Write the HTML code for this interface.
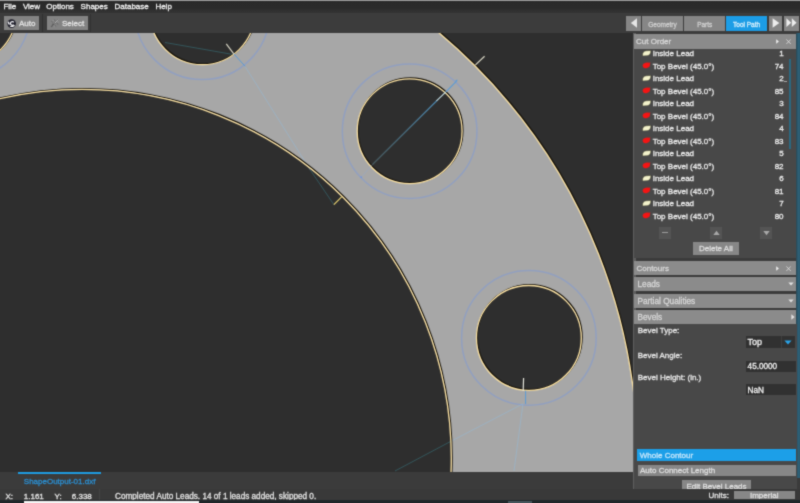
<!DOCTYPE html>
<html>
<head>
<meta charset="utf-8">
<style>
*{box-sizing:border-box;margin:0;padding:0}
html,body{width:800px;height:503px;overflow:hidden;background:#3b3b3b}
body{font-family:"Liberation Sans",sans-serif;font-size:8px;color:#e4e4e4;position:relative;filter:url(#soft);-webkit-text-stroke:0.3px}
.abs{position:absolute}
#menubar{left:0;top:0;width:800px;height:13px;background:linear-gradient(180deg,#2a2a2a 0,#2b2b2b 60%,#343434 100%)}
#topline{left:0;top:0;width:800px;height:1px;background:#9c9c9c}
#menubar span{position:absolute;top:1.9px;line-height:10px;font-size:8px;color:#f4f4f4;white-space:nowrap}
#toolbar{left:0;top:13px;width:800px;height:20px;background:#3c3c3c}
.tbtn{position:absolute;top:3.3px;height:13.7px;background:#838383;color:#e2e2e2;font-size:8px;line-height:15.2px;white-space:nowrap}
.tab{position:absolute;top:2.6px;height:15.2px;background:#868686;color:#cecece;font-size:6.5px;line-height:18.6px;text-align:center;white-space:nowrap}
#canvas{left:0;top:33px;width:633.4px;height:438.7px;overflow:hidden;background:#2e2e2e}
#panel{left:633.4px;top:33px;width:166.6px;height:457px;background:#3b3b3b}
.hdr{position:absolute;left:0.9px;width:161.7px;height:14px;background:#8b8b8b;color:#d6d6d6;font-size:8px;line-height:16.4px;padding-left:2.2px;white-space:nowrap}
.body{position:absolute;left:0.9px;width:161.7px;background:#484848}
.row{position:absolute;left:0;width:161.7px;height:12.5px;line-height:12.5px;font-size:8px;color:#ececec;white-space:nowrap}
.row .t{position:absolute;left:18.4px;top:0}
.row .n{position:absolute;right:12.4px;top:0;text-align:right}
.row svg{position:absolute;left:8.2px;top:1.7px}
.lbl{position:absolute;left:3.4px;font-size:8px;line-height:10px;color:#e6e6e6;white-space:nowrap}
.inp{position:absolute;left:111.3px;width:50.6px;overflow:hidden;background:#313131;color:#f0f0f0;font-size:8px;white-space:nowrap;padding-left:2px}
.gbtn{position:absolute;background:#878787;color:#dedede;font-size:8px;text-align:center;white-space:nowrap}
.sbtn{position:absolute;top:193.6px;width:12.4px;height:11.6px;background:#545454}
#tabstrip{left:0;top:471.7px;width:633.4px;height:17.8px;background:#3b3b3b}
#status{left:0;top:489.2px;width:800px;height:13.8px;background:#393939}
#status span{position:absolute;top:3px;line-height:10px;font-size:8px;color:#e2e2e2;white-space:nowrap}
</style>
</head>
<body>
<svg width="0" height="0" style="position:absolute"><defs><filter id="soft" x="0" y="0" width="100%" height="100%" color-interpolation-filters="sRGB"><feConvolveMatrix order="3" kernelMatrix="0.03 0.1 0.03 0.1 0.48 0.1 0.03 0.1 0.03" edgeMode="duplicate" preserveAlpha="true"/></filter></defs></svg>
<div id="menubar" class="abs">
<span style="left:3.4px">File</span><span style="left:22.9px">View</span><span style="left:46.3px">Options</span><span style="left:80.6px">Shapes</span><span style="left:114.5px">Database</span><span style="left:155.4px">Help</span>
</div>
<div id="topline" class="abs"></div>
<div id="toolbar" class="abs">
  <div class="tbtn" style="left:3.8px;width:35.3px"><span style="position:absolute;left:15.2px">Auto</span>
    <svg style="position:absolute;left:3.5px;top:2.4px" width="9.2" height="9.2" viewBox="0 0 10 10"><circle cx="5" cy="5" r="4.7" fill="#1f1f2b"/><ellipse cx="1.9" cy="4.6" rx="0.9" ry="1.9" transform="rotate(-25 1.9 4.6)" fill="#f0f0f4"/><path d="M7.4 3.6A2 2 0 1 0 7.2 6.2" fill="none" stroke="#f4f4f8" stroke-width="1.3"/><ellipse cx="6" cy="7.7" rx="2.7" ry="0.95" transform="rotate(-12 6 7.7)" fill="#f6f6f6"/></svg>
  </div>
  <div class="abs" style="left:41.6px;top:1px;width:1px;height:18px;background:#303030"></div>
  <div class="tbtn" style="left:46.9px;width:41.2px"><span style="position:absolute;left:15px">Select</span>
    <svg style="position:absolute;left:3.4px;top:1.8px" width="10" height="10" viewBox="0 0 10 10"><path d="M1.2 8.8L8.2 1.6" stroke="#5c5c5c" stroke-width="1.2" fill="none"/><path d="M4.6 5.4L8.2 1.6" stroke="#b4b4b4" stroke-width="1" fill="none"/><path d="M1.4 3.2L2.6 4.2M4.4 1.6L5 2.8M6.8 5.6L8.2 6.2M5.2 7.6L6.2 8.4M2 6L3 6.4" stroke="#5e5e5e" stroke-width="0.9" fill="none"/><path d="M2.8 2L3.4 2.8M7.4 3.8L8.6 4M3.6 8L4.4 8.6" stroke="#aaaaaa" stroke-width="0.8" fill="none"/></svg>
  </div>
  <div class="abs" style="left:89.6px;top:1px;width:1px;height:18px;background:#323232"></div>

  <div class="tab" style="left:626.1px;width:14.8px"><svg style="position:absolute;left:4.4px;top:2.6px" width="8" height="10" viewBox="0 0 8 10"><path d="M7 0.2L7 9.8L0.8 5Z" fill="#e6e6e6"/></svg></div>
  <div class="tab" style="left:642px;width:41px">Geometry</div>
  <div class="tab" style="left:684.4px;width:40.7px">Parts</div>
  <div class="tab" style="left:725.8px;width:41.6px;background:#1c9de6;color:#d4eefc">Tool Path</div>
  <div class="tab" style="left:768.5px;width:13.6px"><svg style="position:absolute;left:3.6px;top:2.6px" width="8" height="10" viewBox="0 0 8 10"><path d="M0.6 0.2L0.6 9.8L7.4 5Z" fill="#ececec"/></svg></div>
  <div class="tab" style="left:783.6px;width:15.3px"><svg style="position:absolute;left:2.2px;top:2.8px" width="11" height="9.4" viewBox="0 0 11 9.4"><path d="M0.4 0.3L0.4 9.1L5.2 4.7ZM5.8 0.3L5.8 9.1L10.6 4.7Z" fill="#eeeeee"/></svg></div>
</div>

<div id="canvas" class="abs">
<svg width="633.4" height="438.7" viewBox="0 33 633.4 438.7" style="position:absolute;left:0;top:0">
  <defs><linearGradient id="lg3" gradientUnits="userSpaceOnUse" x1="372.5" y1="164.5" x2="437" y2="100.5"><stop offset="0" stop-color="#46595e"/><stop offset="0.5" stop-color="#476a7c"/><stop offset="1" stop-color="#4c86ae"/></linearGradient></defs>
  <rect x="0" y="33" width="634" height="440" fill="#2e2e2e"/>
  <circle cx="82.4" cy="458.3" r="555.1" fill="#a7a7a7"/>
  <circle cx="82.4" cy="458.3" r="368.9" fill="#2e2e2e"/>
  <g fill="#2e2e2e">
    <circle cx="528.9" cy="337.9" r="52.4"/>
    <circle cx="409.65" cy="131.2" r="52.4"/>
    <circle cx="202.3" cy="12.3" r="52.4"/>
    <circle cx="-36.2" cy="12.3" r="52.4"/>
  </g>
  <!-- blue offset circles -->
  <g fill="none" stroke="#7395e2" stroke-width="1.5" opacity="0.42">
    <circle cx="528.9" cy="337.9" r="67.3"/>
    <circle cx="409.65" cy="131.2" r="67.3"/>
    <circle cx="202.3" cy="12.3" r="67.3"/>
    <circle cx="-36.2" cy="12.3" r="66.3"/>
  </g>
  <!-- rapid lines in gray -->
  <g fill="none" stroke="#8fbce0" stroke-width="0.9" opacity="0.5">
    <path d="M245 66.3L310.3 170"/>
    <path d="M522.8 403.9L451.5 441"/>
    <path d="M523 403.6L514 471"/>
  </g>
  <!-- rapid lines in dark -->
  <g fill="none" stroke="#35676f" stroke-width="1" opacity="0.7">
    <path d="M310.3 170L333.9 204.7"/>
    <path d="M165 42.5L233 54.5"/>
    <path d="M451.5 441L395 471"/>
    
  </g>
  <!-- dark outlines -->
  <g fill="none" stroke="#120e06" stroke-width="1.4" transform="translate(0.8,-0.8)">
    <circle cx="82.4" cy="458.3" r="555.1"/>
    <circle cx="82.4" cy="458.3" r="368.9"/>
    <circle cx="528.9" cy="337.9" r="52.4"/>
    <circle cx="409.65" cy="131.2" r="52.4"/>
    <circle cx="202.3" cy="12.3" r="52.4"/>
    <circle cx="-36.2" cy="12.3" r="52.4"/>
  </g>
  <!-- yellow outlines -->
  <g fill="none" stroke="#fbe2a4" stroke-width="1.3">
    <circle cx="82.4" cy="458.3" r="555.1"/>
    <circle cx="82.4" cy="458.3" r="368.9"/>
    <circle cx="528.9" cy="337.9" r="52.4"/>
    <circle cx="409.65" cy="131.2" r="52.4"/>
    <circle cx="202.3" cy="12.3" r="52.4"/>
    <circle cx="-36.2" cy="12.3" r="52.4"/>
  </g>
  <!-- leads -->
  <g fill="none" stroke-linecap="butt">
    <path d="M475.5 64.9L484.6 56.3" stroke="#d8d6c4" stroke-width="1.2"/>
    <path d="M341.6 196.9L333.9 204.7" stroke="#e8d070" stroke-width="1.2"/>
    <path d="M226.3 43.8L233.8 53.8" stroke="#d8d6c4" stroke-width="1.2"/>
    <path d="M233.8 53.8L245.1 66.3" stroke="#5b9bd5" stroke-width="1"/>
    <path d="M361.3 177.2L372.5 164.5" stroke="#90a8d0" stroke-width="1" opacity="0.45"/><circle cx="361.3" cy="177.2" r="0.9" fill="#6f93dc" opacity="0.8"/><path d="M372.5 164.5L437 100.5" stroke="url(#lg3)" stroke-width="1.25"/><path d="M436.5 100.8L445.9 91.9" stroke="#c4dfe6" stroke-width="1.1"/>
    <path d="M445.9 91.9L456.3 81.3" stroke="#5b9bd5" stroke-width="1.1"/>
    <path d="M455.2 80.2L457.6 79.4L456.9 82Z" fill="#5b9bd5" stroke="none"/>
    <path d="M523.6 378.1L523.2 390.8" stroke="#e6e6dc" stroke-width="1.2"/>
    <path d="M525.6 390.8L525.6 404" stroke="#5b9bd5" stroke-width="1"/>
  </g>
</svg>
</div>

<div id="panel" class="abs">
  <div class="abs" style="left:0;top:0;width:2.2px;height:457px;background:#5e5e5e"></div>
  <div class="abs" style="left:162.5px;top:0;width:3.7px;height:445px;background:linear-gradient(90deg,#2c4651,#2c5d74 50%,#2d637b 80%,#2b5262)"></div>
  <div class="hdr" style="top:1.2px;height:14.6px;line-height:15.6px;padding-left:1.8px">Cut Order
    <svg style="position:absolute;left:142.2px;top:4.6px" width="3" height="5" viewBox="0 0 3 5"><path d="M0.2 0.2L0.2 4.8L2.9 2.5Z" fill="#ececec"/></svg>
    <svg style="position:absolute;left:151.8px;top:4.4px" width="5.2" height="5.4" viewBox="0 0 5.2 5.4"><path d="M0.4 0.4L4.8 5M4.8 0.4L0.4 5" stroke="#e0e0e0" stroke-width="0.8" fill="none"/></svg>
  </div>
  <div class="body" id="cutbody" style="top:15.8px;height:209.6px">
    <div class="row" style="top:-0.6px"><svg width="9.4" height="6.6" viewBox="0 0 9.4 6.6"><path d="M0.5 6C0.2 2.7 1.7 0.9 4.2 0.8L8.9 0.4C9 3.5 7.7 5.4 5.2 5.7Z" fill="#f4f3cc" stroke="#3a3a24" stroke-width="0.5"/></svg><span class="t">Inside Lead</span><span class="n">1</span></div>
    <div class="row" style="top:11.9px"><svg width="9.4" height="6.6" viewBox="0 0 9.4 6.6"><ellipse cx="4.3" cy="3.4" rx="3.7" ry="2.7" transform="rotate(-14 4.3 3.4)" fill="#f41414"/><path d="M5 0.9L8.4 0.5L7.6 3Z" fill="#f41414"/></svg><span class="t">Top Bevel (45.0°)</span><span class="n">74</span></div>
    <div class="row" style="top:24.4px"><svg width="9.4" height="6.6" viewBox="0 0 9.4 6.6"><path d="M0.5 6C0.2 2.7 1.7 0.9 4.2 0.8L8.9 0.4C9 3.5 7.7 5.4 5.2 5.7Z" fill="#f4f3cc" stroke="#3a3a24" stroke-width="0.5"/></svg><span class="t">Inside Lead</span><span class="n">2</span><div class="abs" style="left:149.8px;top:7.8px;width:2.6px;height:0.8px;background:#a8a8a8"></div></div>
    <div class="row" style="top:36.9px"><svg width="9.4" height="6.6" viewBox="0 0 9.4 6.6"><ellipse cx="4.3" cy="3.4" rx="3.7" ry="2.7" transform="rotate(-14 4.3 3.4)" fill="#f41414"/><path d="M5 0.9L8.4 0.5L7.6 3Z" fill="#f41414"/></svg><span class="t">Top Bevel (45.0°)</span><span class="n">85</span></div>
    <div class="row" style="top:49.4px"><svg width="9.4" height="6.6" viewBox="0 0 9.4 6.6"><path d="M0.5 6C0.2 2.7 1.7 0.9 4.2 0.8L8.9 0.4C9 3.5 7.7 5.4 5.2 5.7Z" fill="#f4f3cc" stroke="#3a3a24" stroke-width="0.5"/></svg><span class="t">Inside Lead</span><span class="n">3</span></div>
    <div class="row" style="top:61.9px"><svg width="9.4" height="6.6" viewBox="0 0 9.4 6.6"><ellipse cx="4.3" cy="3.4" rx="3.7" ry="2.7" transform="rotate(-14 4.3 3.4)" fill="#f41414"/><path d="M5 0.9L8.4 0.5L7.6 3Z" fill="#f41414"/></svg><span class="t">Top Bevel (45.0°)</span><span class="n">84</span></div>
    <div class="row" style="top:74.4px"><svg width="9.4" height="6.6" viewBox="0 0 9.4 6.6"><path d="M0.5 6C0.2 2.7 1.7 0.9 4.2 0.8L8.9 0.4C9 3.5 7.7 5.4 5.2 5.7Z" fill="#f4f3cc" stroke="#3a3a24" stroke-width="0.5"/></svg><span class="t">Inside Lead</span><span class="n">4</span></div>
    <div class="row" style="top:86.9px"><svg width="9.4" height="6.6" viewBox="0 0 9.4 6.6"><ellipse cx="4.3" cy="3.4" rx="3.7" ry="2.7" transform="rotate(-14 4.3 3.4)" fill="#f41414"/><path d="M5 0.9L8.4 0.5L7.6 3Z" fill="#f41414"/></svg><span class="t">Top Bevel (45.0°)</span><span class="n">83</span></div>
    <div class="row" style="top:99.4px"><svg width="9.4" height="6.6" viewBox="0 0 9.4 6.6"><path d="M0.5 6C0.2 2.7 1.7 0.9 4.2 0.8L8.9 0.4C9 3.5 7.7 5.4 5.2 5.7Z" fill="#f4f3cc" stroke="#3a3a24" stroke-width="0.5"/></svg><span class="t">Inside Lead</span><span class="n">5</span></div>
    <div class="row" style="top:111.9px"><svg width="9.4" height="6.6" viewBox="0 0 9.4 6.6"><ellipse cx="4.3" cy="3.4" rx="3.7" ry="2.7" transform="rotate(-14 4.3 3.4)" fill="#f41414"/><path d="M5 0.9L8.4 0.5L7.6 3Z" fill="#f41414"/></svg><span class="t">Top Bevel (45.0°)</span><span class="n">82</span></div>
    <div class="row" style="top:124.4px"><svg width="9.4" height="6.6" viewBox="0 0 9.4 6.6"><path d="M0.5 6C0.2 2.7 1.7 0.9 4.2 0.8L8.9 0.4C9 3.5 7.7 5.4 5.2 5.7Z" fill="#f4f3cc" stroke="#3a3a24" stroke-width="0.5"/></svg><span class="t">Inside Lead</span><span class="n">6</span></div>
    <div class="row" style="top:136.9px"><svg width="9.4" height="6.6" viewBox="0 0 9.4 6.6"><ellipse cx="4.3" cy="3.4" rx="3.7" ry="2.7" transform="rotate(-14 4.3 3.4)" fill="#f41414"/><path d="M5 0.9L8.4 0.5L7.6 3Z" fill="#f41414"/></svg><span class="t">Top Bevel (45.0°)</span><span class="n">81</span></div>
    <div class="row" style="top:149.4px"><svg width="9.4" height="6.6" viewBox="0 0 9.4 6.6"><path d="M0.5 6C0.2 2.7 1.7 0.9 4.2 0.8L8.9 0.4C9 3.5 7.7 5.4 5.2 5.7Z" fill="#f4f3cc" stroke="#3a3a24" stroke-width="0.5"/></svg><span class="t">Inside Lead</span><span class="n">7</span></div>
    <div class="row" style="top:161.9px"><svg width="9.4" height="6.6" viewBox="0 0 9.4 6.6"><ellipse cx="4.3" cy="3.4" rx="3.7" ry="2.7" transform="rotate(-14 4.3 3.4)" fill="#f41414"/><path d="M5 0.9L8.4 0.5L7.6 3Z" fill="#f41414"/></svg><span class="t">Top Bevel (45.0°)</span><span class="n">80</span></div>
    <div class="abs" style="left:155.1px;top:10.6px;width:1.5px;height:90px;background:#2c6880"></div>
    <div class="sbtn" style="left:24.8px;top:178.6px"><div class="abs" style="left:3px;top:4.4px;width:6.4px;height:1.6px;background:#9c9c9c"></div></div>
    <div class="sbtn" style="left:75.6px;top:178.6px"><svg style="position:absolute;left:2.7px;top:2.6px" width="7" height="6" viewBox="0 0 7 6"><path d="M0.3 5L3.5 0.8L6.7 5Z" fill="#a8a8a8"/></svg></div>
    <div class="sbtn" style="left:125.7px;top:178.6px"><svg style="position:absolute;left:2.7px;top:2.6px" width="7" height="6" viewBox="0 0 7 6"><path d="M0.3 1L3.5 5.2L6.7 1Z" fill="#a8a8a8"/></svg></div>
    <div class="gbtn" style="left:58.4px;top:193.6px;width:46.3px;height:12.4px;line-height:14.6px">Delete All</div>
  </div>

  <div class="hdr" style="top:228.4px">Contours
    <svg style="position:absolute;left:142.2px;top:4.4px" width="3" height="5" viewBox="0 0 3 5"><path d="M0.2 0.2L0.2 4.8L2.9 2.5Z" fill="#ececec"/></svg>
    <svg style="position:absolute;left:151.8px;top:4.4px" width="5.2" height="5.4" viewBox="0 0 5.2 5.4"><path d="M0.4 0.4L4.8 5M4.8 0.4L0.4 5" stroke="#e0e0e0" stroke-width="0.8" fill="none"/></svg>
  </div>
  <div class="hdr" style="top:244.2px;padding-left:3.2px;font-size:8.25px">Leads
    <svg style="position:absolute;left:154px;top:5px" width="6" height="4" viewBox="0 0 6 4"><path d="M0.3 0.4L5.7 0.4L3 3.6Z" fill="#e2e2e2"/></svg>
  </div>
  <div class="hdr" style="top:260.6px;padding-left:3.2px;font-size:8.25px">Partial Qualities
    <svg style="position:absolute;left:154px;top:5px" width="6" height="4" viewBox="0 0 6 4"><path d="M0.3 0.4L5.7 0.4L3 3.6Z" fill="#e2e2e2"/></svg>
  </div>
  <div class="hdr" style="top:276.8px;padding-left:3.2px;font-size:8.25px">Bevels
    <svg style="position:absolute;left:156.6px;top:3.8px" width="4" height="6" viewBox="0 0 4 6"><path d="M0.4 0.3L0.4 5.7L3.6 3Z" fill="#e2e2e2"/></svg>
  </div>
  <div class="body" style="top:290.6px;height:166.4px;width:162.6px">
    <div class="lbl" style="top:2.4px">Bevel Type:</div>
    <div class="inp" style="top:12.2px;height:12.4px;line-height:12.4px;width:49.6px;font-size:9px">Top
      <div class="abs" style="left:35.1px;top:0;width:0.8px;height:12.4px;background:#3e3e3e"></div>
      <svg style="position:absolute;left:38.6px;top:4px" width="8" height="5" viewBox="0 0 8 5"><path d="M0.4 0.4L7.6 0.4L4 4.6Z" fill="#29a3e8"/></svg>
    </div>
    <div class="lbl" style="top:27.7px">Bevel Angle:</div>
    <div class="inp" style="top:37.4px;height:10.6px;line-height:11.6px;font-size:8.2px">45.0000</div>
    <div class="lbl" style="top:49.9px">Bevel Height: (in.)</div>
    <div class="inp" style="top:60.8px;height:10.6px;line-height:13.6px;font-size:8.2px">NaN</div>

    <div class="gbtn" style="left:3.1px;top:125.7px;width:158.8px;height:11.9px;line-height:13px;background:#1c9fe8;color:#c4e6fb;text-align:left;padding-left:2.4px">Whole Contour</div>
    <div class="gbtn" style="left:3.7px;top:141.2px;width:157.7px;height:11.7px;line-height:11.7px;text-align:left;padding-left:2px">Auto Connect Length</div>
    <div class="gbtn" style="left:47.3px;top:156.7px;width:69.9px;height:9.7px;line-height:13.6px;overflow:hidden">Edit Bevel Leads</div>
  </div>
</div>

<div id="tabstrip" class="abs">
  <div class="abs" style="left:18px;top:0.4px;width:83.3px;height:2.2px;background:#1e9be0"></div>
  <div class="abs" style="left:23.8px;top:5.8px;line-height:10px;font-size:8px;color:#2b8ed0;white-space:nowrap">ShapeOutput-01.dxf</div>
</div>

<div id="status" class="abs">
  <span style="left:5.5px">X:</span><span style="left:23.8px">1.161</span><span style="left:54.5px">Y:</span><span style="left:71.8px">6.338</span>
  <div class="abs" style="left:99px;top:0;width:0.8px;height:11px;background:#434343"></div>
  <span style="left:115px;font-size:8.2px">Completed Auto Leads. 14 of 1 leads added, skipped 0.</span>
  <span style="left:708.6px;top:2.2px">Units:</span>
  <div class="gbtn" style="left:733.7px;top:1.9px;width:61px;height:7.8px;line-height:9.6px;overflow:hidden">Imperial</div>
  <div class="abs" style="left:0;top:11.2px;width:800px;height:3px;background:#20272a"></div>
  <div class="abs" style="left:508px;top:11.6px;width:24px;height:2.4px;background:#46565c"></div>
  <div class="abs" style="left:24.4px;top:11.9px;width:174.6px;height:2px;background:#f4f4f4"></div>
</div>
</body>
</html>
